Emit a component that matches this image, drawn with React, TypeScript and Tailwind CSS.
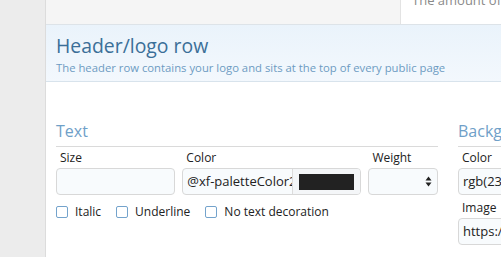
import React from 'react';

const font = { fontFamily: '"Open Sans", "Noto Sans", sans-serif' };

const Field: React.FC<{ label: string; className?: string; children: React.ReactNode }> = ({ label, className, children }) => (
  <div className={`flex flex-col ${className ?? ''}`}>
    <label className="pl-[4px] text-[12px] leading-[20px] text-[#222]">{label}</label>
    {children}
  </div>
);

const Check: React.FC<{ label: string }> = ({ label }) => (
  <label className="flex items-center gap-[7px] text-[12px] text-[#222]">
    <span className="w-[12px] h-[12px] border border-[#74a3cc] rounded-[2px] bg-white" />
    {label}
  </label>
);

export default function App() {
  return (
    <div className="flex w-[501px] h-[257px] overflow-hidden bg-white" style={font}>
      {/* side strip */}
      <div className="w-[46px] shrink-0 bg-[#ececec] border-r border-[#dcdcdc]" />

      <div className="flex-1 flex flex-col min-w-0">
        {/* previous row tail */}
        <div className="h-[25px] shrink-0 flex bg-[#f5f5f5] border-b border-[#dde3e8]">
          <div className="w-[354px] shrink-0" />
          <div className="flex-1 bg-white border-l border-[#e3e3e3] overflow-hidden">
            <div className="pl-[11px] -mt-[10px] text-[13px] leading-[20px] text-[#8a8a8a] whitespace-nowrap">The amount of</div>
          </div>
        </div>

        {/* header */}
        <div className="h-[57px] shrink-0 bg-gradient-to-b from-[#eaf3fb] to-[#f3f8fd] border-b border-[#d8e3ec] px-[10px] pt-[7px]">
          <h2 className="text-[19.4px] leading-[28px] text-[#3b6f98] whitespace-nowrap">Header/logo row</h2>
          <p className="text-[11.3px] leading-[16px] text-[#6d9bc2] whitespace-nowrap">The header row contains your logo and sits at the top of every public page</p>
        </div>

        {/* body */}
        <div className="flex gap-[20px] pl-[10px] pt-[38px]">
          <div className="w-[382px] shrink-0">
            <h3 className="text-[16px] leading-[22px] text-[#6fa0c8] pb-[4px] border-b border-[#dadada]">Text</h3>
            <div className="flex gap-[7px] mt-[1px]">
              <Field label="Size" className="w-[120px]">
                <div className="h-[27px] border border-[#d8d8d8] rounded-[4px] bg-[#f8fbfd]" />
              </Field>
              <Field label="Color" className="w-[180px]">
                <div className="h-[27px] flex border border-[#d8d8d8] rounded-[4px] bg-[#f8fbfd] overflow-hidden">
                  <div className="w-[110px] shrink-0 overflow-hidden pl-[4px] text-[13px] leading-[25px] text-[#222] whitespace-nowrap border-r border-[#dcdcdc]">@xf-paletteColor2</div>
                  <div className="flex-1 flex items-center justify-center bg-[#f4f6f8]">
                    <div className="w-[55px] h-[16px] bg-[#222222]" />
                  </div>
                </div>
              </Field>
              <Field label="Weight" className="w-[70px]">
                <div className="h-[27px] flex items-center justify-end pr-[5px] border border-[#d8d8d8] rounded-[4px] bg-[#f8fbfd]">
                  <svg width="7" height="11" viewBox="0 0 7 11">
                    <path d="M3.5 0.5 L6.5 4.5 H0.5 Z" fill="#222" />
                    <path d="M3.5 10.5 L6.5 6.5 H0.5 Z" fill="#222" />
                  </svg>
                </div>
              </Field>
            </div>
            <div className="flex gap-[15px] mt-[8px]">
              <Check label="Italic" />
              <Check label="Underline" />
              <Check label="No text decoration" />
            </div>
          </div>

          <div className="w-[200px] shrink-0">
            <h3 className="text-[16px] leading-[22px] text-[#6fa0c8] pb-[4px] border-b border-[#dadada] whitespace-nowrap">Background</h3>
            <div className="mt-[1px]">
              <Field label="Color">
                <div className="h-[27px] border border-[#d8d8d8] rounded-[4px] bg-[#f8fbfd] pl-[4px] text-[13px] leading-[25px] text-[#222] whitespace-nowrap overflow-hidden">rgb(235, 235, 235)</div>
              </Field>
            </div>
            <div className="mt-[3px]">
              <Field label="Image">
                <div className="h-[27px] border border-[#d8d8d8] rounded-[4px] bg-[#f8fbfd] pl-[4px] text-[13px] leading-[25px] text-[#222] whitespace-nowrap overflow-hidden">https://example.com/header.png</div>
              </Field>
            </div>
          </div>
        </div>
      </div>
    </div>
  );
}
